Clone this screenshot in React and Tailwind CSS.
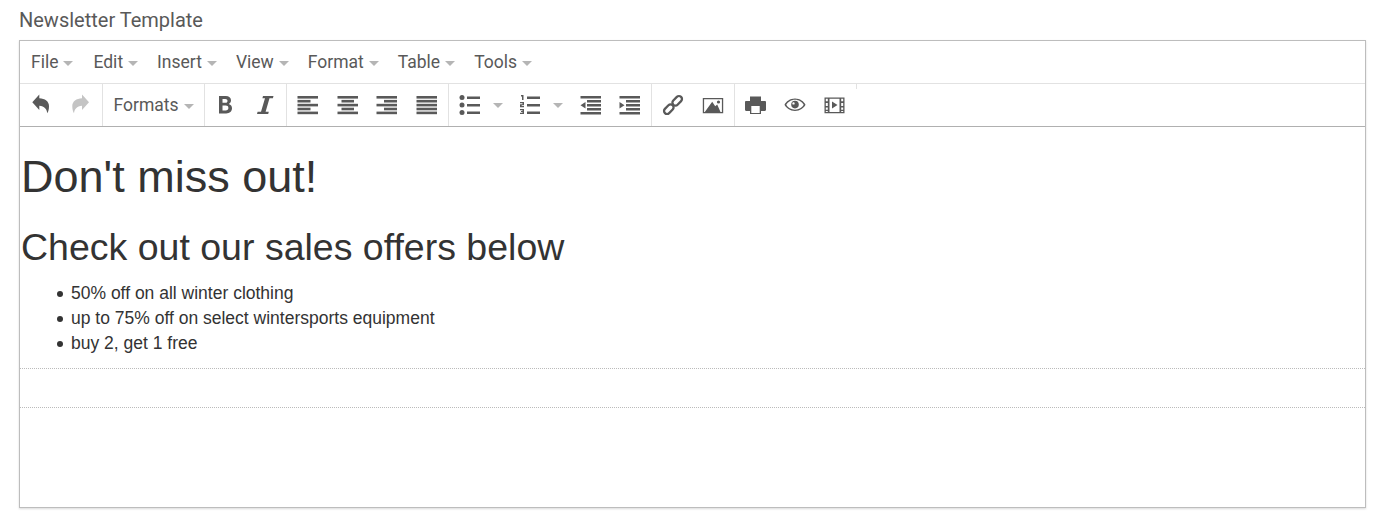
import { Fragment } from 'react';

const menus = ['File', 'Edit', 'Insert', 'View', 'Format', 'Table', 'Tools'];
const offers = ['50% off on all winter clothing', 'up to 75% off on select wintersports equipment', 'buy 2, get 1 free'];

function Caret({ className = '' }) {
  return <span className={`inline-block h-0 w-0 border-x-[5px] border-t-[5px] border-x-transparent border-t-[#b5b5b5] ${className}`} />;
}

function Icon({ children, light }) {
  return (
    <svg width="22" height="22" viewBox="0 0 22 22" fill={light ? '#c4c4c4' : '#595959'}>
      {children}
    </svg>
  );
}

function Bars({ rows }) {
  return (
    <Icon>
      {rows.map(([x, w], i) => (
        <rect key={i} x={x - 0.5} y={2 + i * 3.9} width={w} height="2.600" />
      ))}
    </Icon>
  );
}

const listBars = (
  <Fragment>
    <rect x="8" y="2.500" width="13" height="2.500" />
    <rect x="8" y="10" width="13" height="2.500" />
    <rect x="8" y="17.500" width="13" height="2.500" />
  </Fragment>
);

const indentBars = (
  <Fragment>
    <rect x="0.500" y="2" width="20.500" height="2.500" />
    <rect x="7" y="6" width="14" height="2.500" />
    <rect x="7" y="10" width="14" height="2.500" />
    <rect x="7" y="14" width="14" height="2.500" />
    <rect x="0.500" y="18" width="20.500" height="2.500" />
  </Fragment>
);

const icons = {
  undo: (
    <Icon>
      <path d="M2.300 8.300 9.300.5v3.800C15 4.500 19 7.500 19 12c0 3-.5 5.500-1.700 7.300-.3-3.800-2.800-7.500-8-7.600V16z" />
    </Icon>
  ),
  redo: (
    <Icon light>
      <path d="M19 8.300 12 .5v3.800C6.300 4.500 2.300 7.500 2.300 12c0 3 .5 5.500 1.700 7.300.3-3.800 2.800-7.500 8-7.600V16z" />
    </Icon>
  ),
  bold: (
    <Icon>
      <path fillRule="evenodd" d="M4 2h6.800C14 2 16 3.700 16 6.300c0 1.700-.8 3-2.200 3.700 2 .6 3.200 2.200 3.200 4.300 0 3.100-2.300 5.200-5.800 5.200H4zM7.500 5v3.800h2.800c1.300 0 2.200-.7 2.200-1.900S11.600 5 10.300 5zM7.500 11.600v4.900h3.200c1.600 0 2.700-.9 2.700-2.500s-1.100-2.400-2.700-2.400z" />
    </Icon>
  ),
  italic: (
    <Icon>
      <path d="M9 2h10.500l-.6 2.200h-3.400L11.600 17.800h3.200l-.6 2.200H3l.6-2.200H7L11 4.200H8.400z" />
    </Icon>
  ),
  alignLeft: <Bars rows={[[1, 20.500], [1, 13], [1, 20.500], [1, 13], [1, 20.500]]} />,
  alignCenter: <Bars rows={[[1, 20.500], [5, 12.500], [1, 20.500], [5, 12.500], [1, 20.500]]} />,
  alignRight: <Bars rows={[[1, 20.500], [8.500, 13], [1, 20.500], [8.500, 13], [1, 20.500]]} />,
  justify: <Bars rows={[[1, 20.500], [1, 20.500], [1, 20.500], [1, 20.500], [1, 20.500]]} />,
  bullist: (
    <Icon>
      <circle cx="3" cy="3.500" r="2.500" />
      <circle cx="3" cy="11" r="2.500" />
      <circle cx="3" cy="18.500" r="2.500" />
      {listBars}
    </Icon>
  ),
  numlist: (
    <Icon>
      <path d="M2 1h2.500v5H3V2.500H2zM1 8h4v3.200H2.700v.8H5v1.200H1V10.200h2.500v-1H1zM1 15h4v5H1v-1.200h2.500v-.7H2v-1.100h1.500v-.8H1z" />
      {listBars}
    </Icon>
  ),
  outdent: (
    <Icon>
      {indentBars}
      <path d="M5.500 8v6.500l-5-3.200z" />
    </Icon>
  ),
  indent: (
    <Icon>
      {indentBars}
      <path d="M.5 8v6.500l5-3.200z" />
    </Icon>
  ),
  link: (
    <Icon>
      <g fill="none" stroke="#595959" strokeWidth="2.300">
        <rect x="-5.500" y="-3" width="11" height="6" rx="3" transform="translate(6.800 15.200) rotate(-45)" />
        <rect x="-5.500" y="-3" width="11" height="6" rx="3" transform="translate(15.200 6.800) rotate(-45)" />
      </g>
    </Icon>
  ),
  image: (
    <Icon>
      <path fillRule="evenodd" d="M.8 4h20.400v15.300H.8zM2.100 5.300v12.700h17.800V5.300z" />
      <circle cx="16.500" cy="8" r="1.600" />
      <path d="M2.800 18 10.200 7.700l3 4.500 2-1.700 3.300 7.500z" />
    </Icon>
  ),
  print: (
    <Icon>
      <path fillRule="evenodd" d="M5 2.500h11V7h3.800c.8 0 1.200.5 1.200 1.200v7.600c0 .7-.4 1.200-1.200 1.200H16v3H5v-3H1.200C.4 17 0 16.500 0 15.800V8.200C0 7.500.4 7 1.200 7H5zM6.300 12v7h8.400v-7z" />
    </Icon>
  ),
  eye: (
    <Icon>
      <path fillRule="evenodd" d="M11 4.500c5 0 9 3 10.500 6.300-1.500 3.200-5.500 6.200-10.500 6.200S2 14 .5 10.800C2 7.500 6 4.500 11 4.500zM2.300 10.800c1.500 2.700 4.900 4.900 8.700 4.900s7.200-2.200 8.700-4.900C18.200 8 14.800 5.800 11 5.800S3.800 8 2.300 10.800z" />
      <path fillRule="evenodd" d="M11 6.800a3.800 3.800 0 1 1 0 7.600 3.800 3.800 0 0 1 0-7.600zM9.500 8.200a1.200 1.200 0 1 0 0 2.400 1.200 1.200 0 0 0 0-2.400z" />
    </Icon>
  ),
  media: (
    <Icon>
      <path fillRule="evenodd" d="M.5 3.500h20v15.800H.5zM1.800 4.800v2.500h2V4.800zM1.800 9v3h2V9zM1.800 13.500v2.200h2v-2.200zM1.800 17v1h2v-1zM5.500 4.800V18h10V4.800zM17.200 4.800v2.500h2V4.800zM17.200 9v3h2V9zM17.200 13.500v2.200h2v-2.200zM17.200 17v1h2v-1z" />
      <path d="M8 7.500v7l5.500-3.500z" />
    </Icon>
  ),
};

const groups = [
  { width: 'w-[83px] border-r', items: ['undo', 'redo'] },
  { width: 'w-[102px] border-r', formats: true },
  { width: 'w-[82px] border-r', items: ['bold', 'italic'] },
  { width: 'w-[162px] border-r', items: ['alignLeft', 'alignCenter', 'alignRight', 'justify'] },
  { width: 'w-[203px] border-r', items: ['bullist', 'numlist', 'outdent', 'indent'] },
  { width: 'w-[83px] border-r', items: ['link', 'image'] },
  { width: 'w-[121px] pr-px', items: ['print', 'eye', 'media'] },
];

function ToolButton({ name }) {
  const split = name === 'bullist' || name === 'numlist';
  return (
    <Fragment>
      <div className="flex h-[42px] w-[39.500px] shrink-0 items-center justify-center">{icons[name]}</div>
      {split && (
        <div className="flex h-[42px] w-[21px] shrink-0 items-center justify-start pl-[3px]">
          <Caret />
        </div>
      )}
    </Fragment>
  );
}

export default function App() {
  return (
    <div className="h-[530px] w-[1387px] overflow-hidden bg-white pl-[19px] pt-[9px] font-['Roboto',sans-serif] text-[#595959]">
      <label className="block h-[31px] text-[20px] leading-[22px]">Newsletter Template</label>
      <div className="h-[468px] w-[1347px] border border-[#bdbdbd] shadow-[0_1px_2px_rgba(0,0,0,0.15)]">
        <div className="flex h-[43px] items-center gap-[19px] border-b border-[#e2e2e2] pl-[11px]">
          {menus.map((menu, i) => (
            <div key={menu} className={`flex items-center gap-[5px] text-[17.500px] ${i === 1 ? 'ml-px' : ''}`}>
              <span>{menu}</span>
              <Caret className="mt-[2px]" />
            </div>
          ))}
        </div>
        <div className="flex h-[43px] items-start border-b border-[#b0b0b0]">
          {groups.map((group, i) => (
            <div key={i} className={`flex h-[42px] shrink-0 items-center justify-center border-[#e2e2e2] ${group.width}`}>
              {group.formats ? (
                <div className="flex items-center gap-[5px] text-[17.500px]">
                  <span>Formats</span>
                  <Caret className="mt-[2px]" />
                </div>
              ) : (
                group.items.map((name) => <ToolButton key={name} name={name} />)
              )}
            </div>
          ))}
          <div className="h-[5px] w-px bg-[#e2e2e2]" />
        </div>
        <div className="px-px font-['Liberation_Sans',sans-serif] text-[#333333]">
          <h1 className="mt-[20px] text-[45px] leading-[60px]">Don&apos;t miss out!</h1>
          <h2 className="mt-[15px] text-[37.500px] leading-[50px]">Check out our sales offers below</h2>
          <ul className="mt-[9px] pl-[36px] text-[17.500px] leading-[25px]">
            {offers.map((offer) => (
              <li key={offer} className="flex items-center">
                <span className="mr-[8px] h-[6px] w-[6px] shrink-0 rounded-full bg-[#333333]" />
                {offer}
              </li>
            ))}
          </ul>
        </div>
        <div className="mt-[12px] h-[40px] border-y border-dotted border-[#bbbbbb]" />
      </div>
    </div>
  );
}
